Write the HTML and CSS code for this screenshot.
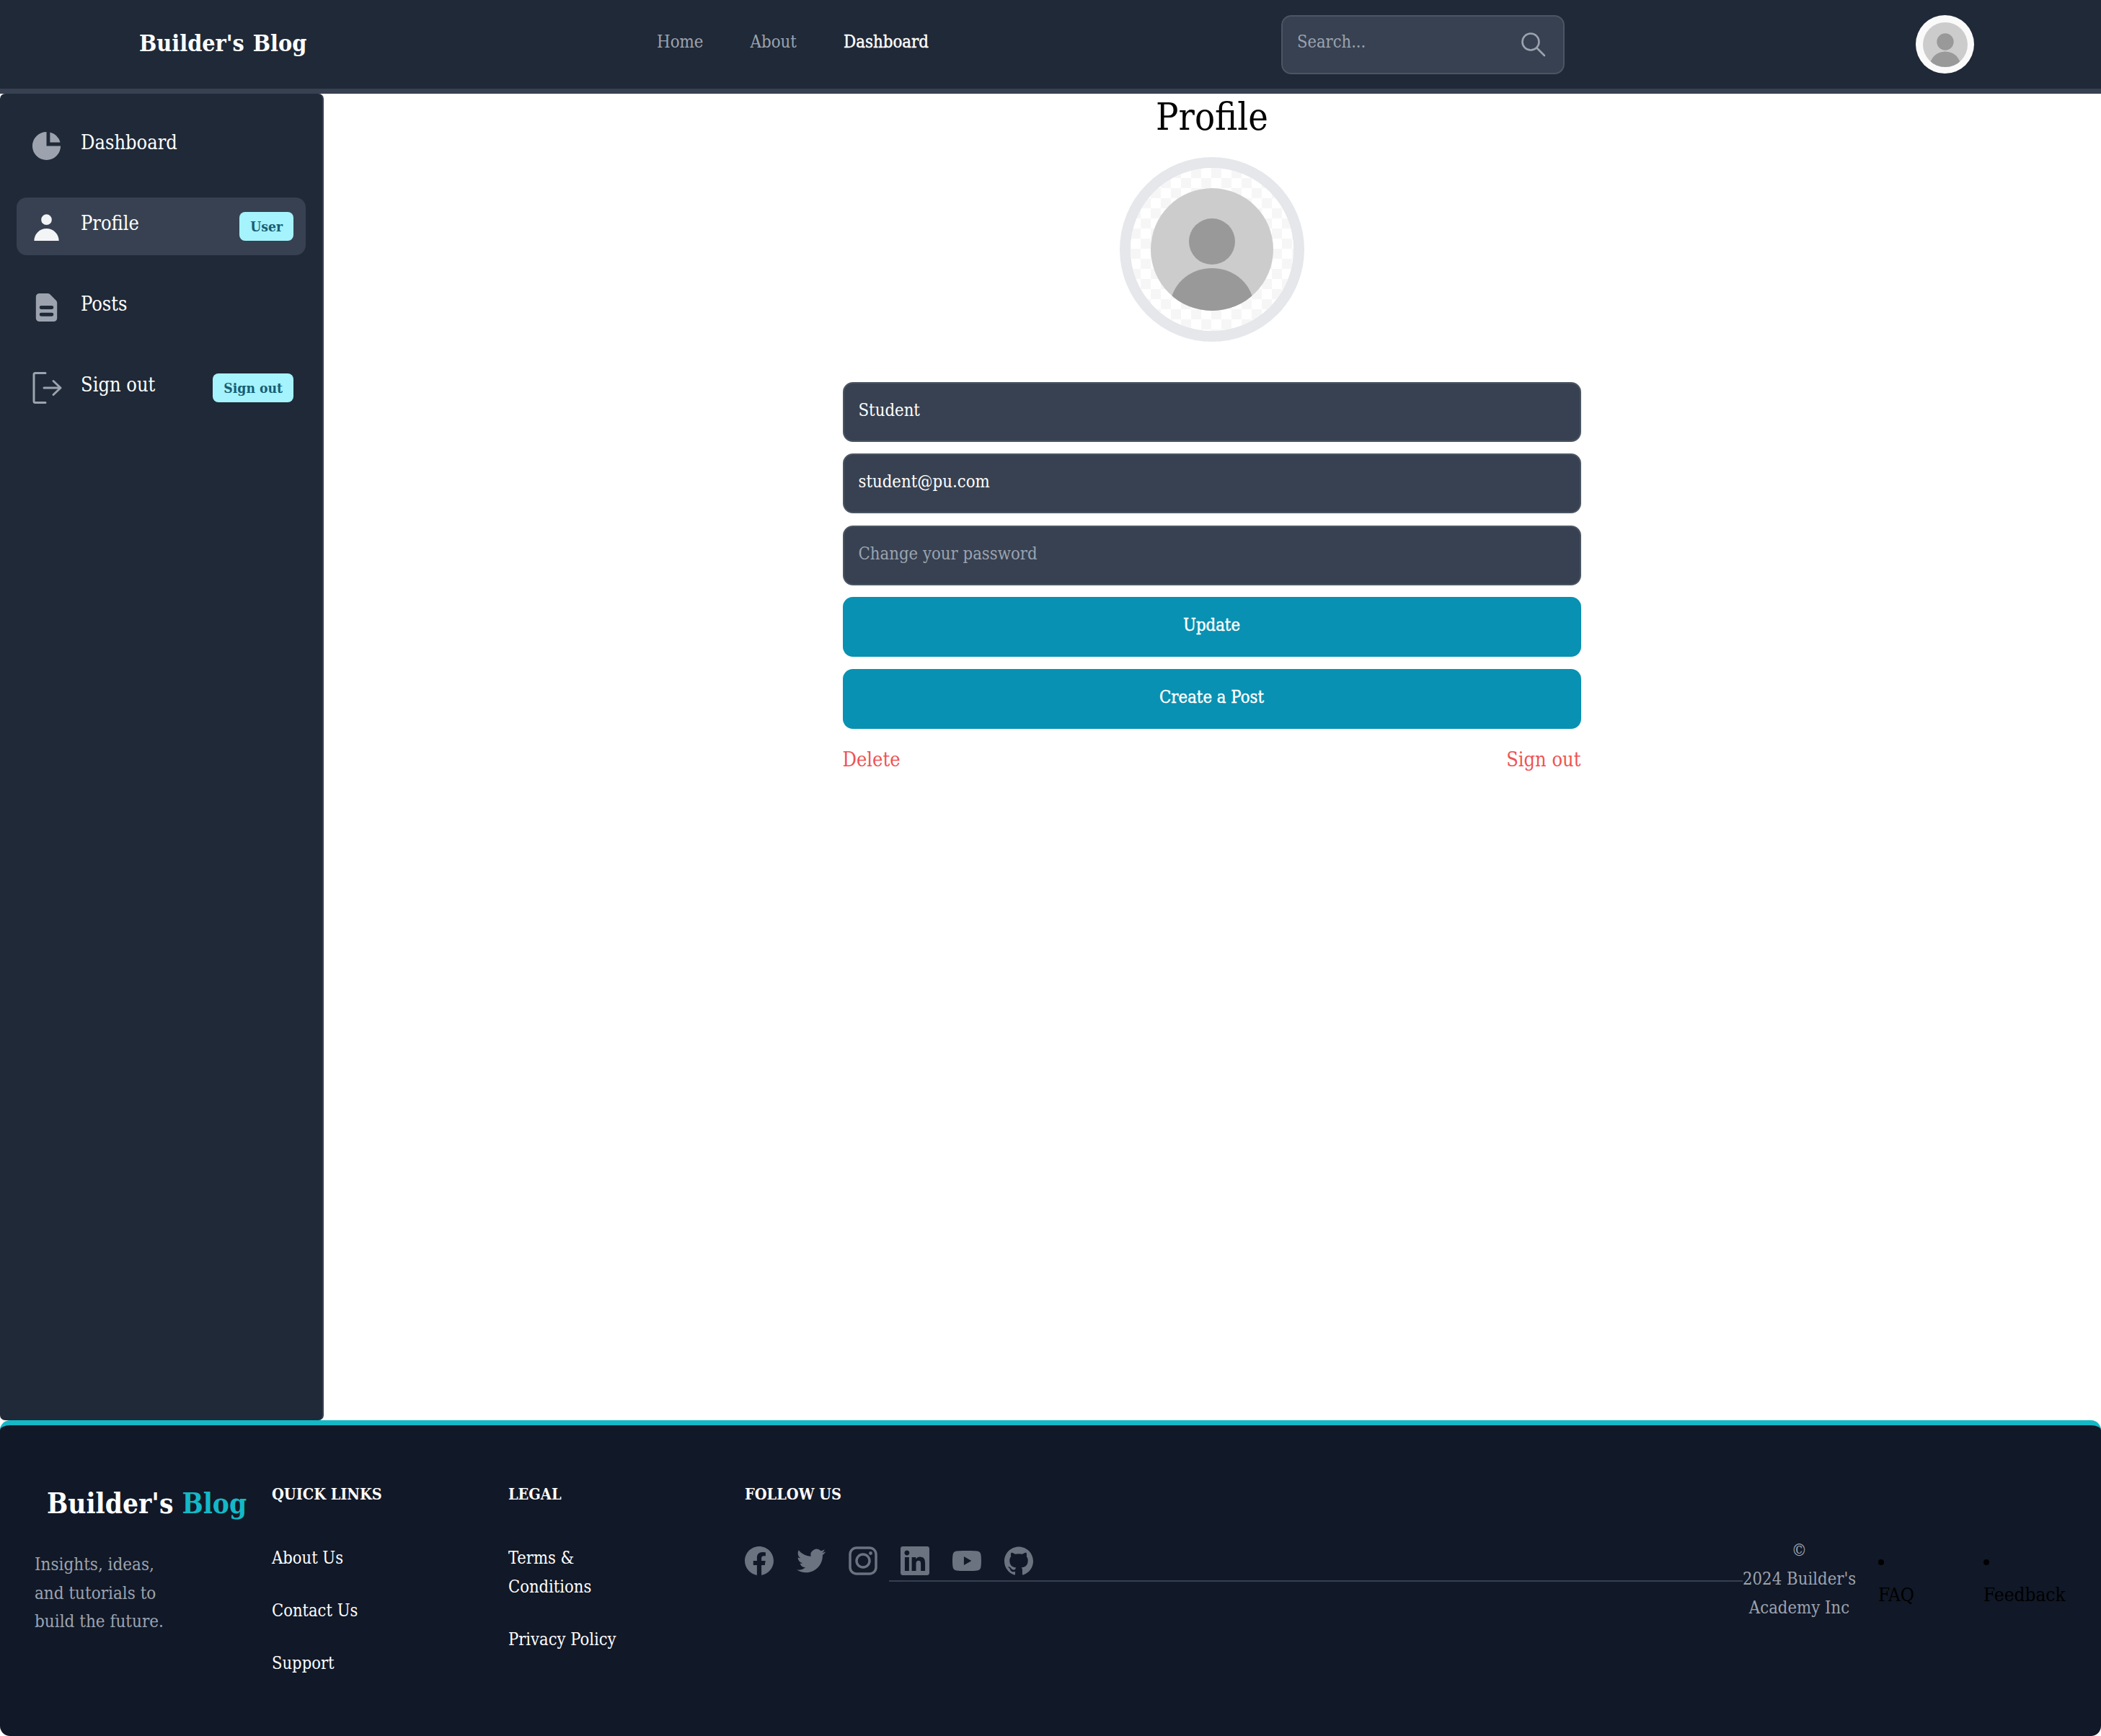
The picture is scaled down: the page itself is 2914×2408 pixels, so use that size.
FILE: index.html
```html
<!DOCTYPE html>
<html lang="en">
<head>
    <meta charset="UTF-8">
    <title>Builder's Blog - Profile</title>
    <link rel="stylesheet" href="styles.css">
</head>
<body>
    <svg class="defs" width="0" height="0">
        <defs>
            <clipPath id="avatar-clip"><circle cx="85" cy="85" r="85"/></clipPath>
            <pattern id="checker" width="28" height="28" patternUnits="userSpaceOnUse">
                <rect width="28" height="28" fill="#fff"/>
                <rect width="14" height="14" fill="#f6f6f7"/>
                <rect x="14" y="14" width="14" height="14" fill="#f6f6f7"/>
            </pattern>
            <symbol id="avatar" viewBox="0 0 170 170">
                <g clip-path="url(#avatar-clip)">
                    <rect width="170" height="170" fill="#ccc"/>
                    <circle cx="85" cy="74" r="32" fill="#999"/>
                    <ellipse cx="85" cy="165" rx="58" ry="54" fill="#999"/>
                </g>
            </symbol>
        </defs>
    </svg>

    <header class="navbar">
        <a class="nav-logo">Builder's Blog</a>
        <nav class="nav-links">
            <a>Home</a>
            <a>About</a>
            <a class="active">Dashboard</a>
        </nav>
        <form class="search">
            <input type="text" placeholder="Search...">
            <svg viewBox="0 0 34 34" fill="none" stroke="#9ca3af" stroke-width="2.6" stroke-linecap="round"><circle cx="13" cy="13" r="11.5"/><path d="M21.5 21.5 32 32"/></svg>
        </form>
        <div class="nav-avatar"><svg><use href="#avatar"/></svg></div>
    </header>

    <div class="page">
        <aside class="sidebar">
            <a class="side-item">
                <svg class="side-icon" viewBox="0 0 20 20" fill="#9ca3af"><path d="M2 10a8 8 0 018-8v8h8a8 8 0 11-16 0z"/><path d="M12 2.252A8.014 8.014 0 0117.748 8H12V2.252z"/></svg>
                <span class="side-label">Dashboard</span>
            </a>
            <a class="side-item active">
                <svg class="side-icon" viewBox="0 0 20 20" fill="#f3f4f6"><path d="M10 9a3 3 0 100-6 3 3 0 000 6zm-7 9a7 7 0 1114 0H3z"/></svg>
                <span class="side-label">Profile</span>
                <span class="badge">User</span>
            </a>
            <a class="side-item">
                <svg class="side-icon" viewBox="0 0 20 20" fill="#9ca3af"><path fill-rule="evenodd" d="M4 4a2 2 0 012-2h4.586A2 2 0 0112 2.586L15.414 6A2 2 0 0116 7.414V16a2 2 0 01-2 2H6a2 2 0 01-2-2V4zm2 6a1 1 0 011-1h6a1 1 0 110 2H7a1 1 0 01-1-1zm1 3a1 1 0 100 2h6a1 1 0 100-2H7z"/></svg>
                <span class="side-label">Posts</span>
            </a>
            <a class="side-item">
                <svg class="side-icon" viewBox="0 0 49 49" fill="none" stroke="#9ca3af" stroke-width="3" stroke-linecap="round" stroke-linejoin="round"><path d="M23 3.500H9Q7 3.500 7 5.500V42.500Q7 44.500 9 44.500H23"/><path d="M21 24H44M34 14.500l10 9.500-10 9.500"/></svg>
                <span class="side-label">Sign out</span>
                <span class="badge">Sign out</span>
            </a>
        </aside>

        <main class="profile">
            <h1>Profile</h1>
            <div class="profile-pic">
                <svg class="checker" viewBox="0 0 226 226"><rect width="226" height="226" fill="url(#checker)"/></svg>
                <svg class="pic"><use href="#avatar"/></svg>
            </div>
            <form class="profile-form">
                <input type="text" value="Student">
                <input type="email" value="student@pu.com">
                <input type="password" placeholder="Change your password">
                <button type="button">Update</button>
                <button type="button">Create a Post</button>
            </form>
            <div class="danger-links">
                <span>Delete</span>
                <span>Sign out</span>
            </div>
        </main>
    </div>

    <footer class="footer">
        <div class="foot-brand">
            <div class="foot-logo">Builder's <span>Blog</span></div>
            <p>Insights, ideas, and tutorials to build the future.</p>
        </div>
        <div class="foot-col">
            <h3>Quick Links</h3>
            <ul>
                <li>About Us</li>
                <li>Contact Us</li>
                <li>Support</li>
            </ul>
        </div>
        <div class="foot-col">
            <h3>Legal</h3>
            <ul>
                <li>Terms &amp; Conditions</li>
                <li>Privacy Policy</li>
            </ul>
        </div>
        <div class="foot-follow">
            <h3>Follow Us</h3>
            <div class="socials">
                <svg viewBox="0 0 24 24"><path d="M24 12.073c0-6.627-5.373-12-12-12s-12 5.373-12 12c0 5.990 4.388 10.954 10.125 11.854v-8.385H7.078v-3.470h3.047V9.430c0-3.007 1.792-4.669 4.533-4.669 1.312 0 2.686.235 2.686.235v2.953H15.830c-1.491 0-1.956.925-1.956 1.874v2.250h3.328l-.532 3.470h-2.796v8.385C19.612 23.027 24 18.062 24 12.073z"/></svg>
                <svg viewBox="0 0 24 24"><path d="M23.953 4.570a10 10 0 01-2.825.775 4.958 4.958 0 002.163-2.723c-.951.555-2.005.959-3.127 1.184a4.920 4.920 0 00-8.384 4.482C7.690 8.095 4.067 6.130 1.640 3.162a4.822 4.822 0 00-.666 2.475c0 1.710.870 3.213 2.188 4.096a4.904 4.904 0 01-2.228-.616v.060a4.923 4.923 0 003.946 4.827 4.996 4.996 0 01-2.212.085 4.936 4.936 0 004.604 3.417 9.867 9.867 0 01-6.102 2.105c-.390 0-.779-.023-1.170-.067a13.995 13.995 0 007.557 2.209c9.053 0 13.998-7.496 13.998-13.985 0-.210 0-.420-.015-.630A9.935 9.935 0 0024 4.590z"/></svg>
                <svg viewBox="0 0 40 40"><rect x="2" y="2" width="36" height="36" rx="9" fill="none" stroke="#6b7280" stroke-width="3.500"/><circle cx="20" cy="20" r="9" fill="none" stroke="#6b7280" stroke-width="3.500"/><circle cx="30.500" cy="9.500" r="2.400"/></svg>
                <svg viewBox="0 0 24 24"><path d="M20.447 20.452h-3.554v-5.569c0-1.328-.027-3.037-1.852-3.037-1.853 0-2.136 1.445-2.136 2.939v5.667H9.351V9h3.414v1.561h.046c.477-.9 1.637-1.850 3.370-1.850 3.601 0 4.267 2.370 4.267 5.455v6.286zM5.337 7.433c-1.144 0-2.063-.926-2.063-2.065 0-1.138.920-2.063 2.063-2.063 1.140 0 2.064.925 2.064 2.063 0 1.139-.925 2.065-2.064 2.065zm1.782 13.019H3.555V9h3.564v11.452zM22.225 0H1.771C.792 0 0 .774 0 1.729v20.542C0 23.227.792 24 1.771 24h20.451C23.200 24 24 23.227 24 22.271V1.729C24 .774 23.200 0 22.222 0h.003z"/></svg>
                <svg viewBox="0 0 24 24"><path d="M23.498 6.186a3.016 3.016 0 0 0-2.122-2.136C19.505 3.545 12 3.545 12 3.545s-7.505 0-9.377.505A3.017 3.017 0 0 0 .502 6.186C0 8.070 0 12 0 12s0 3.930.502 5.814a3.016 3.016 0 0 0 2.122 2.136c1.871.505 9.376.505 9.376.505s7.505 0 9.377-.505a3.015 3.015 0 0 0 2.122-2.136C24 15.930 24 12 24 12s0-3.930-.502-5.814zM9.545 15.568V8.432L15.818 12l-6.273 3.568z"/></svg>
                <svg viewBox="0 0 24 24"><path d="M12 .297c-6.630 0-12 5.373-12 12 0 5.303 3.438 9.800 8.205 11.385.6.113.820-.258.820-.577 0-.285-.010-1.040-.015-2.040-3.338.724-4.042-1.610-4.042-1.610C4.422 18.070 3.633 17.700 3.633 17.700c-1.087-.744.084-.729.084-.729 1.205.084 1.838 1.236 1.838 1.236 1.070 1.835 2.809 1.305 3.495.998.108-.776.417-1.305.760-1.605-2.665-.3-5.466-1.332-5.466-5.930 0-1.310.465-2.380 1.235-3.220-.135-.303-.540-1.523.105-3.176 0 0 1.005-.322 3.300 1.230.960-.267 1.980-.399 3-.405 1.020.006 2.040.138 3 .405 2.280-1.552 3.285-1.230 3.285-1.230.645 1.653.240 2.873.120 3.176.765.840 1.230 1.910 1.230 3.220 0 4.610-2.805 5.625-5.475 5.920.420.360.810 1.096.810 2.220 0 1.606-.015 2.896-.015 3.286 0 .315.210.690.825.570C20.565 22.092 24 17.592 24 12.297c0-6.627-5.373-12-12-12"/></svg>
            </div>
        </div>
        <div class="foot-bottom">
            <hr>
            <p class="copyright">© 2024&nbsp;Builder's Academy Inc</p>
            <ul class="foot-extra">
                <li><a>FAQ</a></li>
                <li><a>Feedback</a></li>
            </ul>
        </div>
    </footer>
</body>
</html>
```

FILE: styles.css
```css
* {
    box-sizing: border-box;
}
body {
    margin: 0;
    min-height: 100vh;
    display: flex;
    flex-direction: column;
    font-family: "DejaVu Serif Condensed", "Liberation Serif", serif;
    font-size: 27px;
    background: white;
    color: black;
}
.defs {
    position: absolute;
}
input, button {
    font-family: inherit;
}

/* navbar */
.navbar {
    height: 130px;
    padding-left: 193px;
    display: grid;
    grid-template-columns: 718px 866px 880px 81px;
    align-items: center;
    background: #1f2937;
    border-bottom: 7px solid #374151;
}
.nav-logo {
    margin-bottom: 4px;
    font-size: 32px;
    font-weight: bold;
    color: white;
    word-spacing: 2px;
}
.nav-links {
    margin-bottom: 8px;
    display: flex;
    gap: 65px;
    font-size: 23.8px;
    color: #9ca3af;
}
.nav-links .active {
    color: white;
    -webkit-text-stroke: 0.4px white;
}
.search {
    width: 393px;
    height: 82px;
    display: flex;
    align-items: center;
    justify-content: space-between;
    padding: 0 24px 0 20px;
    background: #374151;
    border: 2px solid #4b5563;
    border-radius: 14px;
}
.search input {
    width: 280px;
    padding: 0 0 8px;
    background: none;
    border: none;
    outline: none;
    font-size: 23.5px;
    color: white;
}
.search input::placeholder {
    color: #9ca3af;
}
.search svg {
    width: 34px;
    height: 34px;
}
.nav-avatar {
    width: 81px;
    height: 81px;
    display: flex;
    align-items: center;
    justify-content: center;
    background: #fafafa;
    border-radius: 50%;
}
.nav-avatar svg {
    width: 62px;
    height: 62px;
}

/* sidebar */
.page {
    flex: 1;
    display: flex;
}
.sidebar {
    width: 449px;
    padding: 32px 23px;
    display: flex;
    flex-direction: column;
    gap: 32px;
    background: #1f2937;
    border-right: 2px solid #374151;
    border-radius: 7px;
}
.side-item {
    height: 80px;
    padding: 0 17px;
    display: flex;
    align-items: center;
    gap: 23px;
    border-radius: 14px;
    color: white;
}
.side-item.active {
    background: #374151;
}
.side-icon {
    width: 49px;
    height: 49px;
    flex-shrink: 0;
}
.side-label {
    flex: 1;
    padding-bottom: 10px;
}
.badge {
    height: 40px;
    padding: 0 15px;
    display: flex;
    align-items: center;
    font-size: 19.2px;
    font-weight: bold;
    color: #155e75;
    background: #a5f3fc;
    border-radius: 8px;
}

/* profile */
.profile {
    flex: 1;
    padding-right: 1px;
    display: flex;
    flex-direction: column;
    align-items: center;
}
.profile h1 {
    margin: 0;
    height: 88px;
    line-height: 64px;
    font-size: 52px;
    font-weight: normal;
}
.profile-pic {
    width: 256px;
    height: 256px;
    display: flex;
    align-items: center;
    justify-content: center;
    position: relative;
    border: 15px solid #e5e7eb;
    border-radius: 50%;
    overflow: hidden;
}
.checker {
    position: absolute;
    inset: 0;
    width: 226px;
    height: 226px;
}
.pic {
    position: relative;
    width: 170px;
    height: 170px;
}
.profile-form {
    width: 1024px;
    margin: 56px 1px 0 0;
    display: flex;
    flex-direction: column;
    gap: 16.4px;
}
.profile-form input, .profile-form button {
    width: 100%;
    height: 83px;
    border-radius: 14px;
    font-size: 23.7px;
}
.profile-form input {
    padding: 0 20px 5px;
    background: #374151;
    border: 2px solid #4b5563;
    color: white;
    outline: none;
}
.profile-form input::placeholder {
    color: #9ca3af;
}
.profile-form button {
    padding-bottom: 6px;
    background: #0891b2;
    border: none;
    color: white;
    -webkit-text-stroke: 0.4px white;
}
.danger-links {
    width: 1024px;
    margin: 27px 1px 0 0;
    display: flex;
    justify-content: space-between;
    color: #f05252;
}

/* footer */
.footer {
    height: 438px;
    padding: 78px 48px 0;
    display: flex;
    align-items: flex-start;
    background: #111827;
    border-top: 7px solid #14b8c6;
    border-radius: 14px;
}
.foot-brand {
    width: 329px;
    flex-shrink: 0;
}
.foot-logo {
    margin: 8px 0 0 17px;
    font-size: 38.5px;
    font-weight: bold;
    color: white;
    white-space: nowrap;
}
.foot-logo span {
    color: #14b8c6;
}
.foot-brand p {
    width: 190px;
    margin: 43px 0 0;
    font-size: 24px;
    line-height: 39.5px;
    color: #9ca3af;
}
.footer h3 {
    margin: 0 0 50px;
    font-size: 21.5px;
    line-height: 36px;
    font-weight: bold;
    text-transform: uppercase;
    color: white;
}
.foot-col {
    width: 328px;
    flex-shrink: 0;
}
.foot-col ul {
    margin: 0;
    padding: 0;
    list-style: none;
    font-size: 23.5px;
    line-height: 40px;
    color: white;
}
.foot-col li {
    max-width: 190px;
    margin-bottom: 33px;
}
.foot-follow {
    width: 200px;
    flex-shrink: 0;
}
.socials {
    padding-top: 4px;
    display: flex;
    gap: 32px;
    fill: #6b7280;
}
.socials svg {
    width: 40px;
    height: 40px;
    flex-shrink: 0;
}
.foot-bottom {
    flex: 1;
    margin-top: 75px;
    display: flex;
    align-items: center;
}
.foot-bottom hr {
    flex: 1;
    height: 2px;
    margin: 0;
    border: none;
    background: #374151;
}
.copyright {
    width: 157px;
    margin: 0 0 6px;
    font-size: 23.7px;
    line-height: 40px;
    text-align: center;
    color: #9ca3af;
}
.foot-extra {
    margin: 0 0 8px 31px;
    padding: 0;
    display: flex;
    list-style: disc inside;
    font-size: 26px;
}
.foot-extra li {
    width: 146px;
    line-height: 40px;
}
.foot-extra li:last-child {
    width: 115px;
}
.foot-extra a {
    display: block;
    margin-top: 6px;
}
```
